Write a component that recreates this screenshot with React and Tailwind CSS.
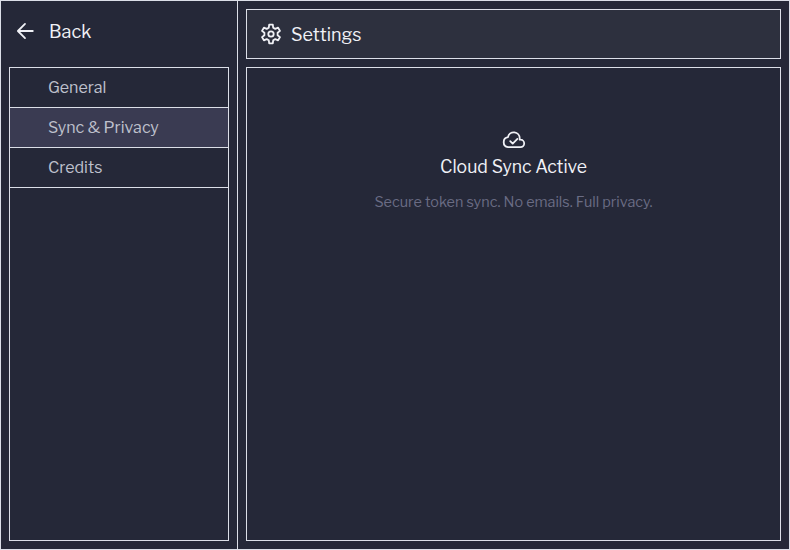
import React from "react";

const FONT = "font-['Libre_Franklin','Roboto','Liberation_Sans',sans-serif]";

function ArrowBack() {
  return (
    <svg className="h-6 w-6 shrink-0" viewBox="0 0 24 24" fill="none" stroke="currentColor" strokeWidth="1.8" strokeLinecap="round" strokeLinejoin="round">
      <path d="M19.800 12H5M12 4.900 4.900 12l7.100 7.100" />
    </svg>
  );
}

function Gear() {
  return (
    <svg className="h-6 w-6 shrink-0" viewBox="0 0 24 24" fill="none" stroke="currentColor" strokeWidth="1.800" strokeLinecap="round" strokeLinejoin="round">
      <path d="M10.200 2.700h3.600l.400 3 2.100 1.200 2.800-1.200 1.900 3.200-2.400 1.900v2.400l2.400 1.900-1.900 3.200-2.800-1.200-2.100 1.200-.400 3h-3.600l-.400-3-2.100-1.200-2.800 1.200L3 15.100l2.400-1.900v-2.400L3 8.900l1.900-3.200 2.800 1.200 2.100-1.200Z" />
      <circle cx="12" cy="12" r="2.700" />
    </svg>
  );
}

function CloudDone() {
  return (
    <svg className="h-6 w-6 shrink-0" viewBox="0 0 24 24" fill="none" stroke="currentColor" strokeWidth="1.8" strokeLinecap="round" strokeLinejoin="round">
      <path d="M6 19.100H18.500A3.700 3.700 0 0 0 18.500 11.700H17.700V10.400A5.900 5.900 0 0 0 6 9.200A5 5 0 0 0 6 19.100Z" />
      <path d="m8.200 13.200 2.500 2.400 4.700-4.700" />
    </svg>
  );
}

const items = [
  { label: "General" },
  { label: "Sync & Privacy", active: true },
  { label: "Credits" },
];

export default function App() {
  return (
    <div className={`${FONT} flex h-screen w-screen overflow-hidden border border-[#dcdfe8] bg-[#252838] text-[#f0f1f6]`}>
      <aside className="flex w-[237px] shrink-0 flex-col border-r border-[#dcdfe8] p-2">
        <button className="flex h-[50px] items-center gap-3 pb-1.5 pl-1 text-left text-lg leading-6">
          <ArrowBack />
          <span className="pt-0.5">Back</span>
        </button>
        <nav className="mt-2 flex flex-1 flex-col border border-[#dcdfe8]">
          {items.map((item) => (
            <button
              key={item.label}
              className={`${item.active ? "bg-[#3a3b52]" : ""} h-10 border-b border-[#dcdfe8] pl-[38px] text-left text-base text-[#bec0cc]`}
            >
              {item.label}
            </button>
          ))}
        </nav>
      </aside>
      <main className="flex flex-1 flex-col gap-2 p-2">
        <header className="flex h-[50px] items-center gap-2 border border-[#dcdfe8] bg-[#2d303e] pl-3 text-lg">
          <Gear />
          <h1 className="pt-0.5">Settings</h1>
        </header>
        <section className="flex flex-1 flex-col items-center border border-[#dcdfe8] pt-[60px]">
          <CloudDone />
          <h2 className="mt-[3px] text-[17.6px] leading-6">Cloud Sync Active</h2>
          <p className="mt-3 text-[14.4px] leading-[22px] text-[#6a6c84]">Secure token sync. No emails. Full privacy.</p>
        </section>
      </main>
    </div>
  );
}
